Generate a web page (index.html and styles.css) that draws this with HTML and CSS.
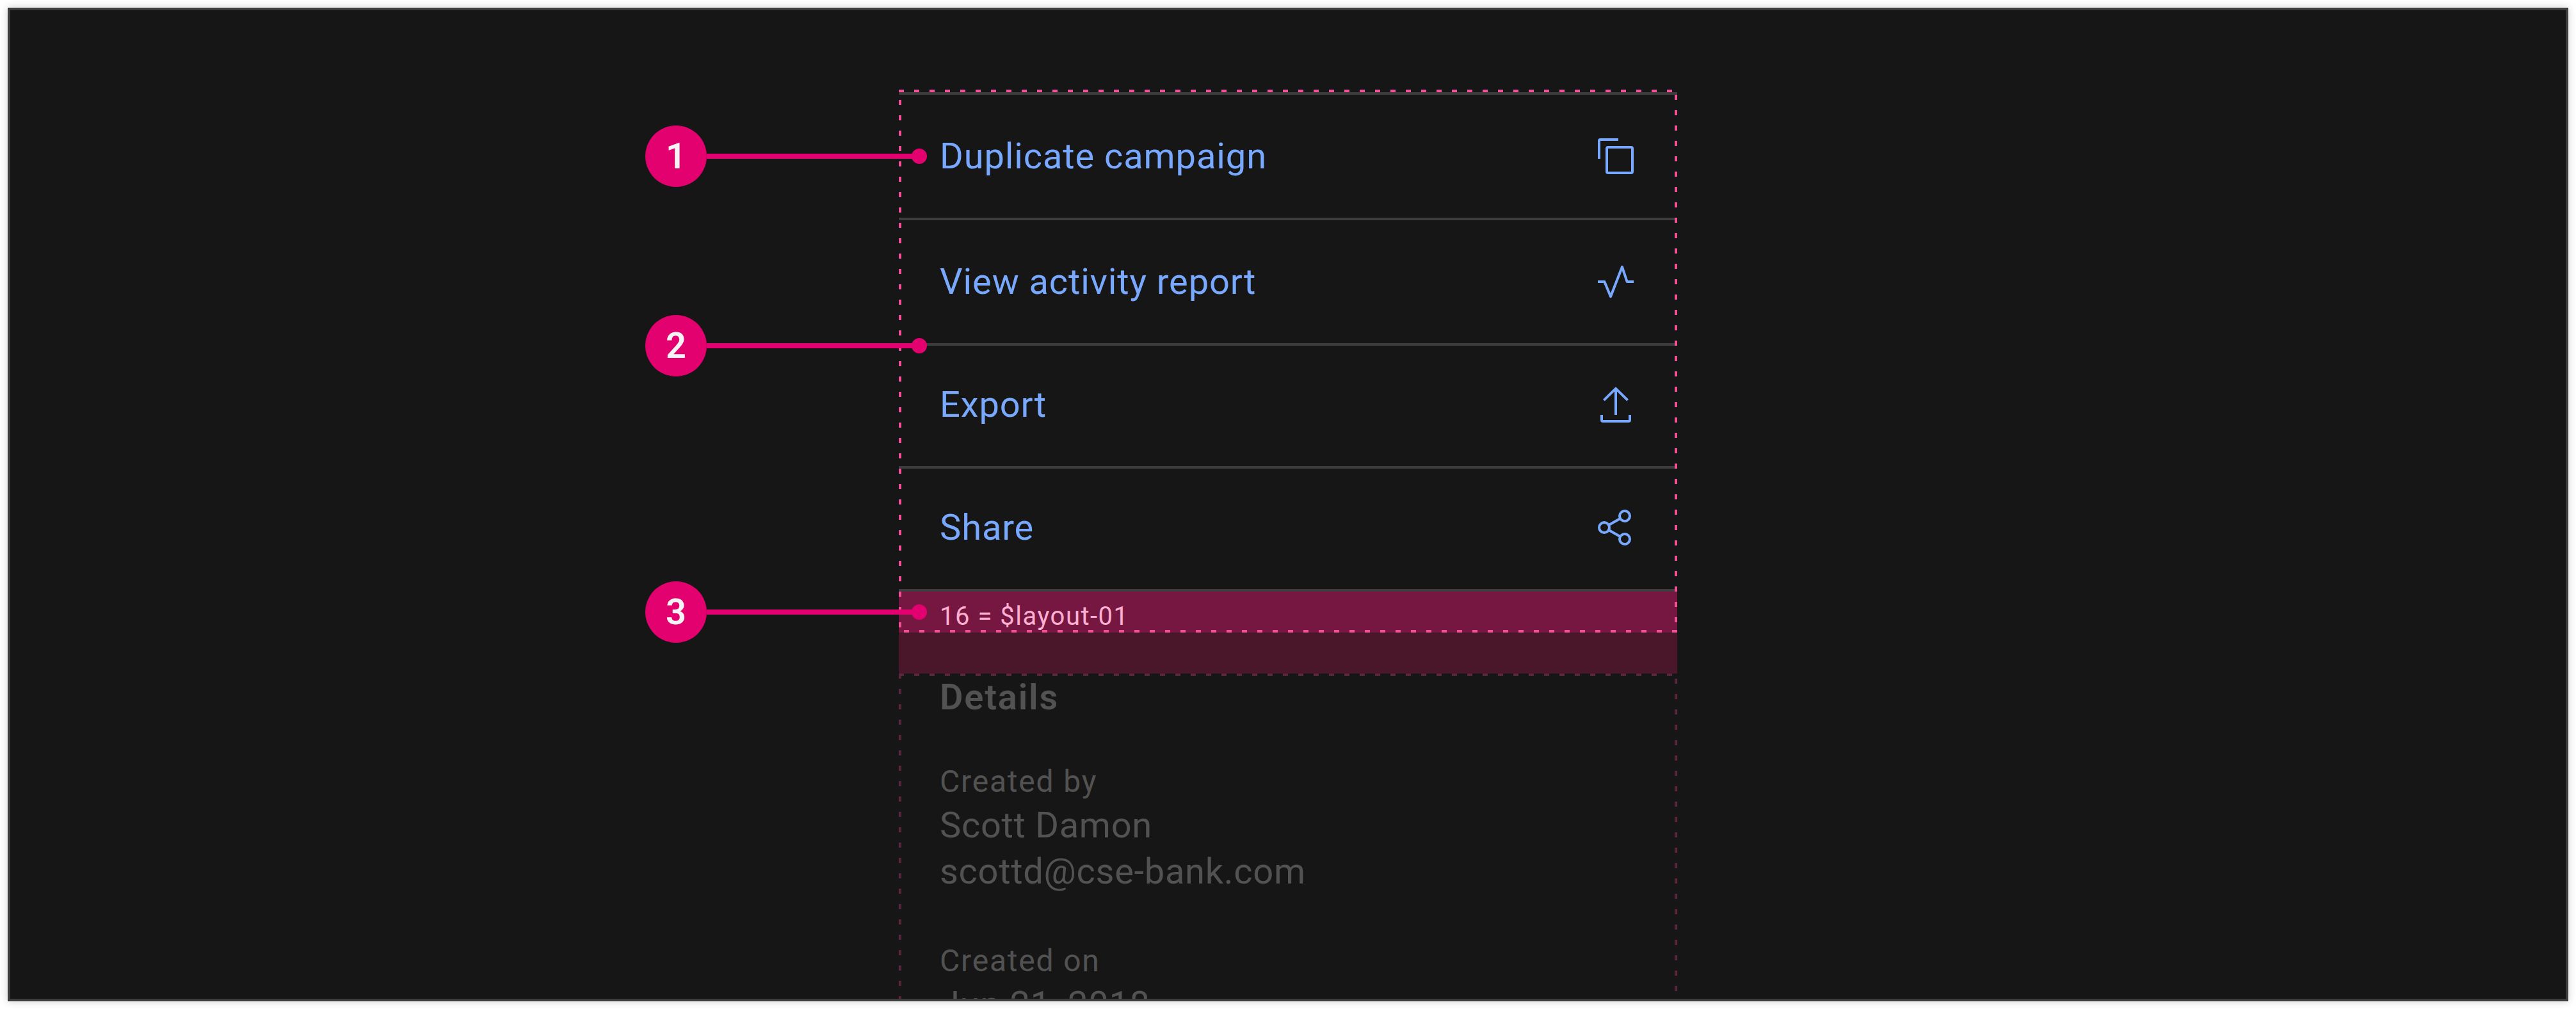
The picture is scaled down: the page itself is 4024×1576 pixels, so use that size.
FILE: index.html
```html
<!DOCTYPE html>
<html lang="en">
<head>
  <meta charset="UTF-8" />
  <title>Side panel spacing</title>
  <link rel="stylesheet" href="styles.css">
</head>
<body>
  <div class="frame">

    <div class="panel">
      <!-- Action list -->
      <div class="row">
        <span class="row-label">Duplicate campaign</span>
        <svg class="icon" viewBox="0 0 16 16">
          <rect x="4.5" y="4.5" width="10" height="10" rx=".5" />
          <path d="M1.5 9V2a.5.5 0 0 1 .5-.5h7" />
        </svg>
      </div>
      <div class="row">
        <span class="row-label">View activity report</span>
        <svg class="icon" viewBox="0 0 16 16">
          <path d="M1 8h2.6L6 13.8 10.5 2.2 12.4 8H15" />
        </svg>
      </div>
      <div class="row row-short">
        <span class="row-label">Export</span>
        <svg class="icon" viewBox="0 0 16 16">
          <path d="M8 12V2M3.35 6.3 8 1.7l4.65 4.6" />
          <path d="M2.5 12v2a.5.5 0 0 0 .5.5h10a.5.5 0 0 0 .5-.5v-2" />
        </svg>
      </div>
      <div class="row row-short">
        <span class="row-label">Share</span>
        <svg class="icon" viewBox="0 0 16 16">
          <circle cx="11.5" cy="3.5" r="2" />
          <circle cx="3.5" cy="8" r="2" />
          <circle cx="11.5" cy="12.5" r="2" />
          <path d="M5.3 7 9.7 4.5M5.3 9 9.7 11.5" />
        </svg>
      </div>

      <!-- Spacing highlight -->
      <div class="spacing-band">
        <span class="spacing-label">16 = $layout-01</span>
      </div>
      <div class="spacing-rest"></div>

      <!-- Dimmed part of the panel -->
      <div class="details">
        <h3 class="details-title">Details</h3>
        <p class="details-key">Created by</p>
        <p class="details-value">Scott Damon</p>
        <p class="details-value">scottd@cse-bank.com</p>
        <p class="details-key details-key-next">Created on</p>
        <p class="details-value">Jun 21, 2018</p>
      </div>

      <!-- Dashed guides -->
      <div class="guide guide-top"></div>
      <div class="guide guide-left"></div>
      <div class="guide guide-right"></div>
      <div class="guide guide-bottom"></div>
      <div class="guide guide-dim-bottom"></div>
      <div class="guide guide-dim-left"></div>
      <div class="guide guide-dim-right"></div>
    </div>

    <!-- Callouts -->
    <div class="callout callout-1"><span class="callout-num">1</span><span class="callout-line"></span><span class="callout-dot"></span></div>
    <div class="callout callout-2"><span class="callout-num">2</span><span class="callout-line"></span><span class="callout-dot"></span></div>
    <div class="callout callout-3"><span class="callout-num">3</span><span class="callout-line"></span><span class="callout-dot"></span></div>

  </div>
</body>
</html>
```

FILE: styles.css
```css
body {
  margin: 0;
  background: #fff;
  font-family: Roboto, "Liberation Sans", sans-serif;
}

.frame {
  position: relative;
  box-sizing: border-box;
  width: 4000px;
  height: 1552px;
  margin: 12px;
  overflow: hidden;
  background: #161616;
  border: 4px solid #3d3d3d;
  box-shadow: 0 0 12px rgba(0, 0, 0, 0.2);
}

.panel {
  position: relative;
  width: 1216px;
  margin: 128px 0 0 1388px;
}

.row {
  display: flex;
  align-items: center;
  justify-content: space-between;
  height: 192px;
  padding: 0 64px;
  border-top: 4px solid #3d3d3d;
  color: #78a9ff;
}

.row-short {
  box-sizing: border-box;
  height: 192px;
  padding-bottom: 4px;
}

.row-label {
  font-size: 56px;
  line-height: 74px;
  letter-spacing: 0.9px;
}

.icon {
  width: 64px;
  height: 64px;
  fill: none;
  stroke: #78a9ff;
  stroke-width: 1;
  stroke-linejoin: round;
}

.spacing-band {
  height: 64px;
  padding-left: 64px;
  background: #751740;
  border-top: 4px solid #3d3d3d;
  color: #ffafd2;
  font-size: 40px;
  line-height: 78px;
}

.spacing-label {
  letter-spacing: 1.5px;
}

.spacing-rest {
  height: 64px;
  background: #491729;
}

.details {
  padding-left: 64px;
  color: #525252;
}

.details-title {
  margin: 0;
  padding-top: 1px;
  font-size: 56px;
  line-height: 72px;
  font-weight: 600;
  letter-spacing: 1.8px;
}

.details-value {
  margin: 0;
  font-size: 56px;
  line-height: 72px;
  letter-spacing: 0.7px;
}

.details-key {
  margin: 64px 0 0;
  font-size: 48px;
  line-height: 64px;
  letter-spacing: 1.8px;
}

.details-key-next {
  margin-top: 72px;
}

.guide {
  position: absolute;
}

.guide-top,
.guide-bottom,
.guide-dim-bottom {
  height: 4px;
  background: repeating-linear-gradient(to right, #ee5396 0 8px, transparent 8px 24px);
}

.guide-left,
.guide-right,
.guide-dim-left,
.guide-dim-right {
  width: 4px;
  background: repeating-linear-gradient(to bottom, #ee5396 0 8px, transparent 8px 24px);
}

.guide-top {
  top: -4px;
  left: 0;
  width: 1216px;
}

.guide-left {
  top: 12px;
  left: 0;
  height: 828px;
}

.guide-right {
  top: 4px;
  right: 0;
  height: 824px;
}

.guide-bottom {
  top: 840px;
  left: 8px;
  width: 1208px;
}

.guide-dim-bottom {
  top: 908px;
  left: 0;
  width: 1216px;
  background: repeating-linear-gradient(to right, #552840 0 8px, transparent 8px 24px);
}

.guide-dim-left {
  top: 908px;
  left: 0;
  height: 520px;
  background: repeating-linear-gradient(to bottom, #552840 0 8px, transparent 8px 24px);
}

.guide-dim-right {
  top: 916px;
  right: 0;
  height: 520px;
  background: repeating-linear-gradient(to bottom, #552840 0 8px, transparent 8px 24px);
}

.callout {
  position: absolute;
  left: 992px;
  display: flex;
  align-items: center;
}

.callout-1 {
  top: 180px;
}

.callout-2 {
  top: 476px;
}

.callout-3 {
  top: 892px;
}

.callout-num {
  width: 96px;
  height: 96px;
  border-radius: 50%;
  background: #e3006f;
  color: #f4f4f4;
  font-size: 56px;
  font-weight: 600;
  line-height: 96px;
  text-align: center;
}

.callout-line {
  width: 324px;
  height: 8px;
  background: #e3006f;
}

.callout-dot {
  width: 24px;
  height: 24px;
  margin-left: -4px;
  border-radius: 50%;
  background: #e3006f;
}
```
